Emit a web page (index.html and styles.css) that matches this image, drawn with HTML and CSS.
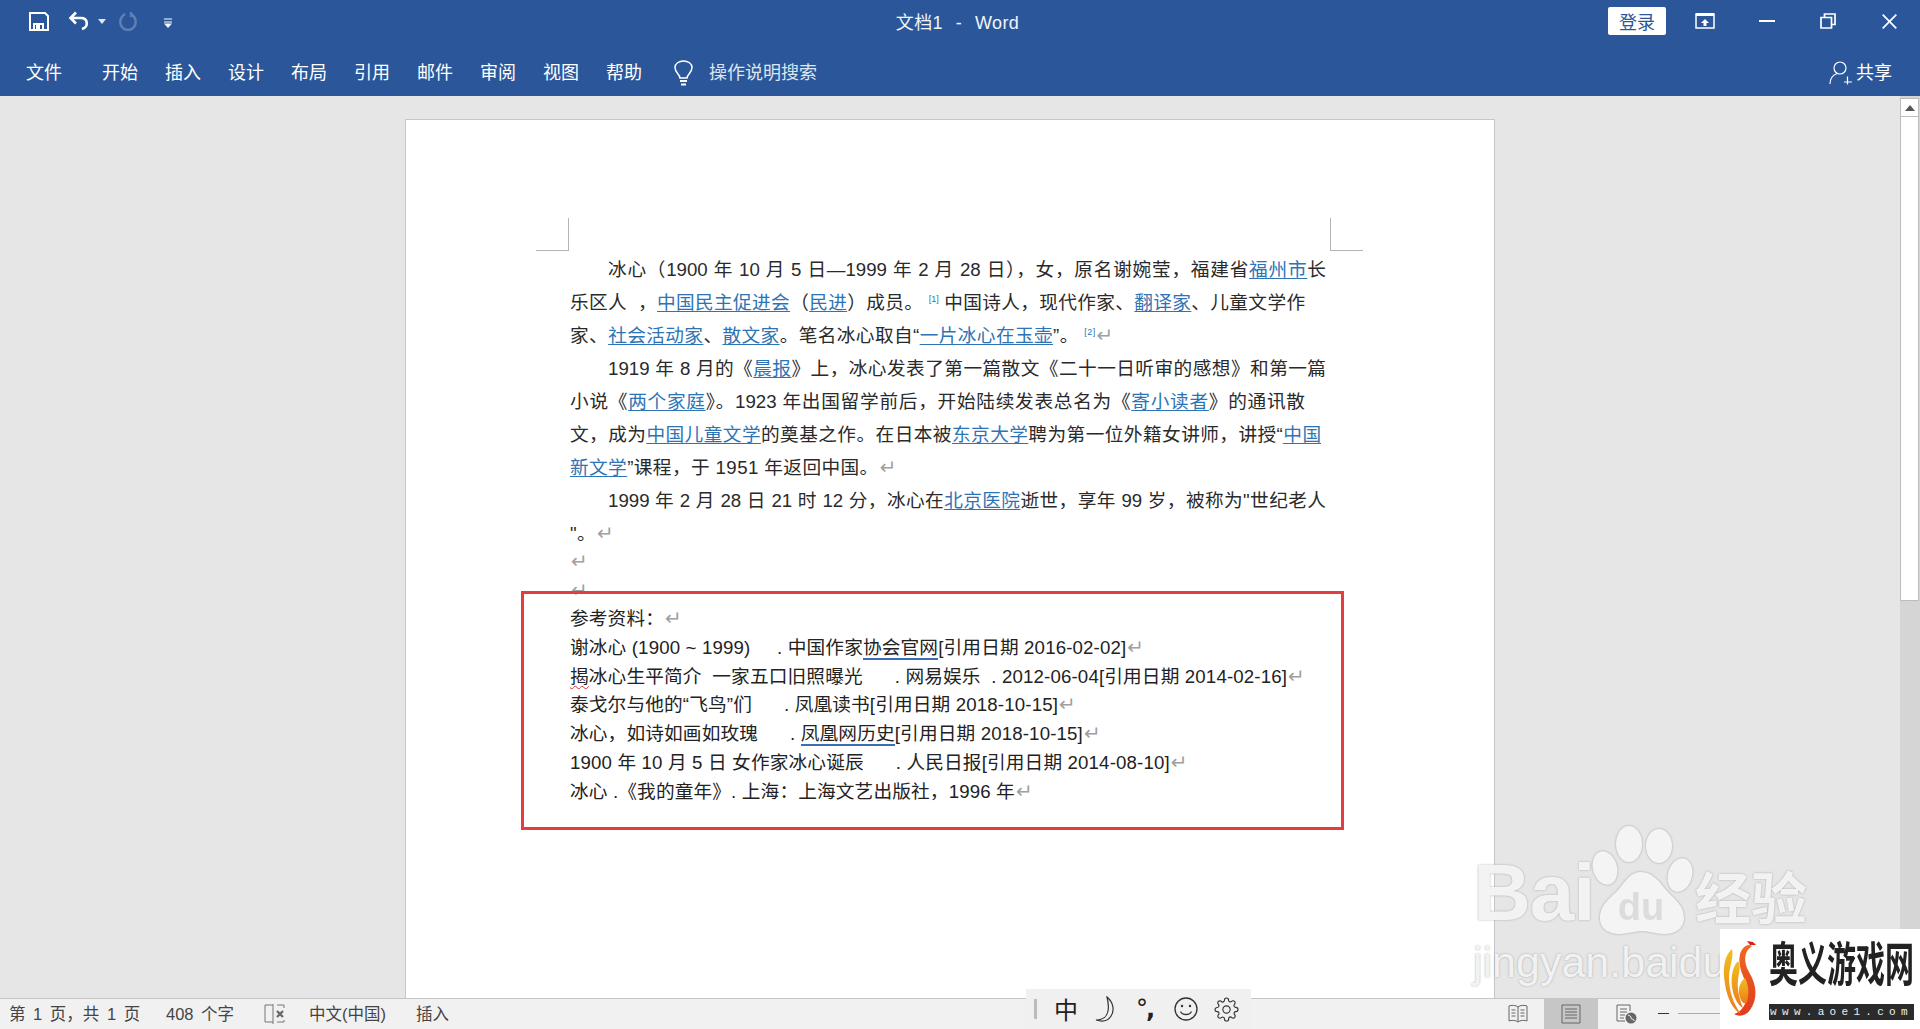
FILE: index.html
```html
<!DOCTYPE html>
<html lang="zh-CN">
<head>
<meta charset="utf-8">
<title>文档1 - Word</title>
<link rel="stylesheet" href="styles.css">
</head>
<body>
<div class="app">
  <header class="titlebar">
    <div class="quick">
      <svg class="ic-save" viewBox="0 0 20 19"><path d="M1 1h15l3 3v14H1z M5 18v-6h9v6 M8 18v-4h2v4" fill="none" stroke="#fff" stroke-width="2"/></svg>
      <svg class="ic-undo" viewBox="0 0 22 20"><path d="M8 1.500 2.500 7 8 12.500 M3 7h10c7 0 8 9 1 11" fill="none" stroke="#fff" stroke-width="2.600"/></svg>
      <svg class="ic-drop" viewBox="0 0 8 5"><path d="M0 0h8L4 5z" fill="#dfe6f1"/></svg>
      <svg class="ic-redo" viewBox="0 0 20 20"><path d="M7 3C2 6 1 12 4 16c3 4 9 4 12 0 3-4 2-10-3-13M13 1v5" fill="none" stroke="#5f80b6" stroke-width="2.400"/></svg>
      <svg class="ic-custom" viewBox="0 0 10 10"><path d="M1 1h8M1 4h8" stroke="#fff" stroke-width="1"/><path d="M1 5.500h8L5 10z" fill="#fff"/></svg>
    </div>
    <div class="doc-title">文档1&nbsp; - &nbsp;Word</div>
    <div class="win">
      <button class="login">登录</button>
      <svg class="ic-ribbon" viewBox="0 0 20 16"><path d="M1 1h18v14H1z" fill="none" stroke="#fff" stroke-width="1.500"/><path d="M1 1.500h18" stroke="#fff" stroke-width="3"/><path d="M10 6l-4 4h2.500v3h3v-3H14z" fill="#fff"/></svg>
      <svg class="ic-min" viewBox="0 0 16 16"><path d="M0 8h16" stroke="#fff" stroke-width="2"/></svg>
      <svg class="ic-restore" viewBox="0 0 16 16"><path d="M1 4.500h10.500V15H1z M4.500 4V1H15v10.500h-3" fill="none" stroke="#fff" stroke-width="1.700"/></svg>
      <svg class="ic-close" viewBox="0 0 15 15"><path d="M.7.7l13.600 13.600M14.300.7.700 14.300" stroke="#fff" stroke-width="1.700"/></svg>
    </div>
  </header>
  <nav class="menubar">
    <span class="tab tab-file">文件</span>
    <span class="tab">开始</span>
    <span class="tab">插入</span>
    <span class="tab">设计</span>
    <span class="tab">布局</span>
    <span class="tab">引用</span>
    <span class="tab">邮件</span>
    <span class="tab">审阅</span>
    <span class="tab">视图</span>
    <span class="tab">帮助</span>
    <svg class="ic-bulb" viewBox="0 0 19 26"><path d="M6 18c0-4-5-5-5-10.500C1 3.500 5 1 9.500 1S18 3.500 18 7.500C18 13 13 14 13 18z" fill="none" stroke="#fff" stroke-width="1.500"/><path d="M6 21h7M7 24.500h5" stroke="#fff" stroke-width="2"/></svg>
    <span class="search">操作说明搜索</span>
    <div class="share">
      <svg class="ic-share" viewBox="0 0 23 24"><circle cx="11" cy="7" r="6" fill="none" stroke="#fff" stroke-width="1.200"/><path d="M1 23c0-6 3-9 7-10.500M15 21h8M18.500 15.500v8" fill="none" stroke="#fff" stroke-width="1.200"/></svg>
      <span>共享</span>
    </div>
  </nav>
  <main class="workspace">
    <div class="canvas">
      <article class="page">
        <i class="crop crop-l"></i>
        <i class="crop crop-r"></i>
        <div class="para">
          <div class="ln indent w-full">冰心（1900 年 10 月 5 日—1999 年 2 月 28 日），女，原名谢婉莹，福建省<a class="lk">福州市</a>长</div>
          <div class="ln w-short">乐区人&nbsp; ，<a class="lk">中国民主促进会</a>（<a class="lk">民进</a>）成员。 <sup class="ref">[1]</sup> 中国诗人，现代作家、<a class="lk">翻译家</a>、儿童文学作</div>
          <div class="ln-free">家、<a class="lk">社会活动家</a>、<a class="lk">散文家</a>。笔名冰心取自“<a class="lk">一片冰心在玉壶</a>”。 <sup class="ref">[2]</sup><span class="mk">↵</span></div>
          <div class="ln indent w-full">1919 年 8 月的《<a class="lk">晨报</a>》上，冰心发表了第一篇散文《二十一日听审的感想》和第一篇</div>
          <div class="ln w-short">小说《<a class="lk">两个家庭</a>》。1923 年出国留学前后，开始陆续发表总名为《<a class="lk">寄小读者</a>》的通讯散</div>
          <div class="ln w-mid">文，成为<a class="lk">中国儿童文学</a>的奠基之作。在日本被<a class="lk">东京大学</a>聘为第一位外籍女讲师，讲授“<a class="lk">中国</a></div>
          <div class="ln-free"><a class="lk">新文学</a>”课程，于 1951 年返回中国。<span class="mk">↵</span></div>
          <div class="ln indent w-full">1999 年 2 月 28 日 21 时 12 分，冰心在<a class="lk">北京医院</a>逝世，享年 99 岁，被称为"世纪老人</div>
          <div class="ln-free">"。<span class="mk">↵</span></div>
        </div>
        <div class="refs">
          <div class="rl first"><span class="mk">↵</span></div>
          <div class="rl"><span class="mk">↵</span></div>
          <div class="rl">参考资料：<span class="mk">↵</span></div>
          <div class="rl">谢冰心 (1900 ~ 1999)     . 中国作家<span class="dbl">协会官网</span>[引用日期 2016-02-02]<span class="mk">↵</span></div>
          <div class="rl"><span class="wavy">揭</span>冰心生平简介  一家五口旧照曝光      . 网易娱乐  . 2012-06-04[引用日期 2014-02-16]<span class="mk">↵</span></div>
          <div class="rl">泰戈尔与他的“飞鸟”们      . 凤凰读书[引用日期 2018-10-15]<span class="mk">↵</span></div>
          <div class="rl">冰心，如诗如画如玫瑰      . <span class="dbl">凤凰网历史</span>[引用日期 2018-10-15]<span class="mk">↵</span></div>
          <div class="rl">1900 年 10 月 5 日 女作家冰心诞辰      . 人民日报[引用日期 2014-08-10]<span class="mk">↵</span></div>
          <div class="rl">冰心 .《我的童年》. 上海：上海文艺出版社，1996 年<span class="mk">↵</span></div>
        </div>
        <div class="redbox"></div>
      </article>
    </div>
    <aside class="scroll">
      <div class="sc-up"><svg class="ic-up" viewBox="0 0 10 6"><path d="M5 0l5 6H0z" fill="#555"/></svg></div>
      <div class="sc-thumb"></div>
    </aside>
  </main>
  <footer class="status">
    <span class="st-page">第 1 页，共 1 页</span>
    <span class="st-count">408 个字</span>
    <svg class="ic-book" viewBox="0 0 21 22"><path d="M9 2H1v17h8M9 1v20" fill="none" stroke="#777" stroke-width="1"/><path d="M13 2h7v3M20 17v2h-7" fill="none" stroke="#777" stroke-width="1"/><path d="M13 8l6 6M19 8l-6 6" stroke="#666" stroke-width="2.200"/></svg>
    <span class="st-lang">中文(中国)</span>
    <span class="st-ins">插入</span>
    <div class="st-right">
      <svg class="ic-read" viewBox="0 0 20 20"><path d="M10 3C8 1 3 1 1 2v15c2-1 7-1 9 1 2-2 7-2 9-1V2c-2-1-7-1-9 1zM10 3v15M3.500 6h4M3.500 9h4M3.500 12h4M12.500 6h4M12.500 9h4M12.500 12h4" fill="none" stroke="#666" stroke-width="1"/></svg>
      <div class="view-active"><svg class="ic-print" viewBox="0 0 20 20"><path d="M1 1h18v18H1zM4 5h12M4 8h12M4 11h12M4 14h12" fill="none" stroke="#666" stroke-width="1"/></svg></div>
      <svg class="ic-web" viewBox="0 0 21 20"><path d="M14 7V1H1v16h8M4 5h7M4 8h7M4 11h5M4 14h4" fill="none" stroke="#666" stroke-width="1"/><circle cx="15" cy="14" r="5.500" fill="#666"/><path d="M12 11c2 1 3 1 3 3s3 0 3 3" fill="none" stroke="#fff"/></svg>
      <i class="zoom-minus"></i>
      <i class="zoom-line"></i>
    </div>
  </footer>

  <div class="ime">
    <i class="ime-grip"></i>
    <span class="ime-zh">中</span>
    <svg class="ic-moon" viewBox="0 0 23 27"><path d="M13 1c6 5 8 13 4 19-3 5-9 6-15 4 6 0 11-3 12-9 1-5 0-10-1-14z" fill="none" stroke="#333" stroke-width="1.200"/></svg>
    <span class="ime-punct">°<b>,</b></span>
    <svg class="ic-smile" viewBox="0 0 24 24"><circle cx="12" cy="12" r="11" fill="none" stroke="#333" stroke-width="1.300"/><circle cx="8" cy="9" r="1.200" fill="#333"/><circle cx="16" cy="9" r="1.200" fill="#333"/><path d="M6.500 14.500c2 4 9 4 11 0" fill="none" stroke="#333" stroke-width="1.300"/></svg>
    <svg class="ic-gear" viewBox="0 0 24 24"><circle cx="12" cy="12" r="3.500" fill="none" stroke="#333" stroke-width="1.100"/><path d="M19.400 15a1.650 1.650 0 0 0 .33 1.820l.06.06a2 2 0 0 1 0 2.830 2 2 0 0 1-2.830 0l-.06-.06a1.650 1.650 0 0 0-1.820-.33 1.650 1.650 0 0 0-1 1.510V21a2 2 0 0 1-2 2 2 2 0 0 1-2-2v-.09A1.650 1.650 0 0 0 9 19.400a1.650 1.650 0 0 0-1.820.33l-.06.06a2 2 0 0 1-2.830 0 2 2 0 0 1 0-2.830l.06-.06a1.650 1.650 0 0 0 .33-1.820 1.650 1.650 0 0 0-1.510-1H3a2 2 0 0 1-2-2 2 2 0 0 1 2-2h.09A1.650 1.650 0 0 0 4.600 9a1.650 1.650 0 0 0-.33-1.820l-.06-.06a2 2 0 0 1 0-2.830 2 2 0 0 1 2.830 0l.06.06a1.650 1.650 0 0 0 1.820.33H9a1.650 1.650 0 0 0 1-1.510V3a2 2 0 0 1 2-2 2 2 0 0 1 2 2v.09a1.650 1.650 0 0 0 1 1.510 1.650 1.650 0 0 0 1.820-.33l.06-.06a2 2 0 0 1 2.830 0 2 2 0 0 1 0 2.830l-.06.06a1.650 1.650 0 0 0-.33 1.820V9a1.650 1.650 0 0 0 1.510 1H21a2 2 0 0 1 2 2 2 2 0 0 1-2 2h-.09a1.650 1.650 0 0 0-1.510 1z" fill="none" stroke="#333" stroke-width="1.100"/></svg>
  </div>

  <div class="wm">
    <div class="wm-top">
      <span class="wm-bai">Bai</span>
      <svg class="wm-paw" viewBox="0 0 105 110">
        <ellipse cx="39" cy="19" rx="13" ry="18"/>
        <ellipse cx="69" cy="21" rx="13" ry="17"/>
        <ellipse cx="15" cy="43" rx="12" ry="17" transform="rotate(-15 15 43)"/>
        <ellipse cx="90" cy="50" rx="12" ry="17" transform="rotate(15 90 50)"/>
        <path d="M51 47c-10 0-15 8-22 17-8 9-19 15-19 29 0 12 10 16 20 16 8 0 15-3 22-3s14 3 22 3c12 0 20-6 20-16 0-13-10-19-18-28-7-9-14-18-25-18z"/>
        <text x="51" y="95" class="wm-du">du</text>
      </svg>
      <span class="wm-jy">经验</span>
    </div>
    <div class="wm-url">jingyan.baidu</div>
  </div>

  <div class="logo">
    <svg class="ic-phoenix" viewBox="0 0 40 80">
      <defs>
        <linearGradient id="pa" x1="0" y1="0" x2="0" y2="1"><stop offset="0" stop-color="#f0c01c"/><stop offset="1" stop-color="#ee7a1c"/></linearGradient>
        <linearGradient id="pb" x1="0" y1="0" x2="0" y2="1"><stop offset="0" stop-color="#ef6a22"/><stop offset="1" stop-color="#e23a1c"/></linearGradient>
      </defs>
      <path d="M24 3l6 1 3 3-6 0z" fill="#d8231c"/>
      <path d="M29 8C21 13 20 24 26 34c8 13 9 27 1 38-4 6-11 7-16 4 9-2 15-14 13-26-2-11-10-20-7-34 2-6 7-11 12-8z" fill="url(#pb)"/>
      <path d="M9 11C2 17-1 30 2 46c2 14 8 26 16 30C10 66 6 52 6 40c0-12 5-19 3-29z" fill="url(#pa)"/>
      <path d="M15 23C9 29 7 42 10 54c2 8 6 14 10 16-4-10-6-20-5-28 1-8 3-13 0-19z" fill="url(#pa)"/>
      <path d="M22 40c-6 4-8 14-4 22 2 4 4 4 6 2 2-8 2-16-2-24z" fill="url(#pa)"/>
    </svg>
    <div class="logo-text">
      <div class="logo-cn"><span class="logo-cn-in">奥义游戏网</span></div>
      <div class="logo-url">www.aoe1.com</div>
    </div>
  </div>
</div>
</body>
</html>
```
FILE: styles.css
```css
* { box-sizing: border-box; }
html, body { margin: 0; height: 100%; overflow: hidden; }
body { font-family: "Liberation Sans", "Noto Sans CJK SC", sans-serif; color: #222; }
.app { position: relative; display: flex; flex-direction: column; height: 1029px; width: 1920px; overflow: hidden; background: #e6e6e6; }

svg { display: block; flex: none; }

/* title bar */
.titlebar { display: grid; grid-template-columns: 1fr auto 1fr; align-items: center; height: 47px; padding-bottom: 5px; background: #2b579a; color: #fff; }
.quick { display: flex; align-items: center; padding-left: 29px; }
.ic-save { width: 20px; height: 19px; margin-right: 19px; }
.ic-undo { width: 22px; height: 20px; margin-right: 8px; }
.ic-drop { width: 8px; height: 5px; margin-right: 12px; }
.ic-redo { width: 20px; height: 20px; margin-right: 25px; }
.ic-custom { width: 10px; height: 10px; margin-top: 4px; }
.doc-title { font-size: 18px; letter-spacing: .4px; word-spacing: 1px; color: #f1f4f9; margin-left: -5px; }
.win { display: flex; align-items: center; justify-content: flex-end; padding-right: 23px; }
.login { width: 58px; height: 28px; margin-right: 29px; padding: 0; border: 0; border-radius: 2px; background: #fff; color: #2b579a; font: 18px "Noto Sans CJK SC", sans-serif; line-height: 28px; }
.ic-ribbon { width: 20px; height: 16px; margin-right: 44px; }
.ic-min { width: 16px; height: 16px; margin-right: 45px; }
.ic-restore { width: 16px; height: 16px; margin-right: 46px; }
.ic-close { width: 15px; height: 15px; }

/* menu */
.menubar { display: flex; align-items: center; gap: 27px; height: 49px; padding: 2px 28px 0 26px; background: #2b579a; color: #fff; font-size: 18px; line-height: 24px; }
.tab { white-space: nowrap; }
.tab-file { margin-right: 13px; }
.ic-bulb { width: 19px; height: 26px; margin-left: 5px; margin-right: -11px; }
.search { color: #dde5f0; }
.share { display: flex; align-items: center; gap: 4px; margin-left: auto; }
.ic-share { width: 23px; height: 24px; }

/* workspace */
.workspace { display: flex; flex: 1; min-height: 0; }
.canvas { display: flex; justify-content: center; flex: 1; min-width: 0; padding-top: 23px; background: #e6e6e6; overflow: hidden; }
.page { position: relative; width: 1090px; padding: 133px 0 0 164px; background: #fff; border: 1px solid #c6c6c6; border-bottom: 0; font-size: 18.67px; color: #2a2a2a; }
.crop { position: absolute; width: 33px; height: 33px; top: 98px; border-bottom: 1px solid #b4b4b4; }
.crop-l { left: 130px; border-right: 1px solid #b4b4b4; }
.crop-r { left: 924px; border-left: 1px solid #b4b4b4; }
.ln { line-height: 33px; height: 33px; text-align: justify; text-align-last: justify; }
.ln-free { line-height: 33px; height: 33px; letter-spacing: .4px; }
.indent { padding-left: 38px; }
.w-full { width: 756px; }
.w-short { width: 735px; }
.w-mid { width: 751px; }
.lk { color: #2e74b5; text-decoration: underline; text-underline-offset: 2px; text-decoration-thickness: 1px; }
.ref { font-size: 9px; line-height: 0; vertical-align: 7px; color: #2e74b5; }
.mk { font: 20px/1 "DejaVu Sans", sans-serif; color: #a0a0a0; margin-left: 1px; letter-spacing: 0; }

.rl { height: 28.7px; line-height: 28.7px; white-space: pre; letter-spacing: .15px; color: #222; }
.rl.first { margin-top: -2px; }
.dbl { display: inline-block; height: 26px; line-height: 28.7px; border-bottom: 2px solid #3a6db5; }
.wavy { text-decoration: underline wavy #d9342c 1px; text-underline-offset: 2px; }
.redbox { position: absolute; left: 115px; top: 471px; width: 823px; height: 239px; border: 3px solid #e53c3f; pointer-events: none; }

/* scrollbar */
.scroll { flex: none; width: 20px; padding-top: 2px; background: #d5d5d5; }
.sc-up { display: flex; align-items: center; justify-content: center; width: 19px; height: 19px; background: #fff; border: 1px solid #bdbdbd; }
.ic-up { width: 10px; height: 6px; }
.sc-thumb { width: 19px; height: 484px; background: #fff; border: 1px solid #bdbdbd; border-top: 0; }

/* status */
.status { display: flex; align-items: center; height: 31px; padding-left: 9px; background: #f1f1f1; border-top: 1px solid #c6c6c6; font-size: 16.5px; line-height: 22px; color: #444; white-space: nowrap; }
.st-page { width: 157px; word-spacing: 3px; }
.st-count { width: 98px; word-spacing: 3px; }
.ic-book { width: 21px; height: 22px; margin-right: 24px; }
.st-lang { width: 107px; }
.st-right { display: flex; align-items: center; align-self: stretch; margin-left: auto; width: 412px; margin-top: -1px; height: 31px; }
.ic-read { width: 20px; height: 20px; margin-right: 16px; }
.view-active { display: flex; align-items: center; justify-content: center; width: 54px; height: 31px; background: #c6c6c6; margin-right: 18px; }
.ic-print { width: 20px; height: 20px; }
.ic-web { width: 21px; height: 20px; margin-right: 21px; }
.zoom-minus { width: 11px; height: 1px; background: #333; margin-right: 9px; }
.zoom-line { flex: 1; height: 1px; background: #aaa; }

/* IME toolbar */
.ime { position: absolute; left: 1026px; top: 989px; display: flex; align-items: center; width: 225px; height: 40px; padding-left: 8px; background: #f0f0f0; color: #222; }
.ime-grip { width: 3px; height: 20px; background: #bbb; margin-right: 17px; }
.ime-zh { width: 24px; font: 24px/30px "Noto Sans CJK SC", sans-serif; margin-right: 16px; }
.ic-moon { width: 23px; height: 27px; margin-right: 19px; }
.ime-punct { width: 21px; font: 24px/30px "DejaVu Sans", sans-serif; margin-right: 17px; white-space: nowrap; letter-spacing: -2px; }
.ime-punct b { font-weight: 700; }
.ic-smile { width: 24px; height: 24px; margin-right: 16px; }
.ic-gear { width: 25px; height: 25px; }

/* watermark */
.wm { position: absolute; left: 1473px; top: 825px; width: 345px; pointer-events: none; }
.wm-top { display: flex; align-items: flex-end; height: 110px; }
.wm-bai { width: 117px; font: 700 80px/84px "Liberation Sans", sans-serif; color: rgba(247,247,247,.95); text-shadow: 0 0 2px rgba(130,130,130,.7); letter-spacing: -1px; }
.wm-paw { width: 105px; height: 110px; fill: rgba(247,247,247,.97); filter: drop-shadow(0 0 1px rgba(130,130,130,.7)); }
.wm-du { font: 700 38px "Liberation Sans", sans-serif; fill: #dcdcdc; text-anchor: middle; }
.wm-jy { width: 115px; font: 700 56px/80px "Noto Sans CJK SC", sans-serif; color: rgba(247,247,247,.95); text-shadow: 0 0 2px rgba(130,130,130,.7); white-space: nowrap; }
.wm-url { margin-top: 1px; font: 43px/52px "Liberation Sans", sans-serif; color: rgba(247,247,247,.95); text-shadow: 0 0 2px rgba(130,130,130,.7); }

/* logo */
.logo { position: absolute; right: 0; bottom: 0; display: flex; width: 200px; height: 100px; padding: 9px 8px 0 3px; gap: 6px; background: #fff; }
.ic-phoenix { width: 40px; height: 80px; }
.logo-text { flex: 1; }
.logo-cn { height: 59px; font: 700 29px/34px "Liberation Serif", "Noto Sans CJK SC", serif; color: #222; white-space: nowrap; }
.logo-cn-in { display: block; transform: scaleY(1.6); transform-origin: top; }
.logo-url { height: 16px; margin-top: 7px; background: #2b2b2b; color: #eee; font: 11px/16px "Liberation Mono", monospace; letter-spacing: 5.300px; text-align: center; white-space: nowrap; overflow: hidden; }
```
